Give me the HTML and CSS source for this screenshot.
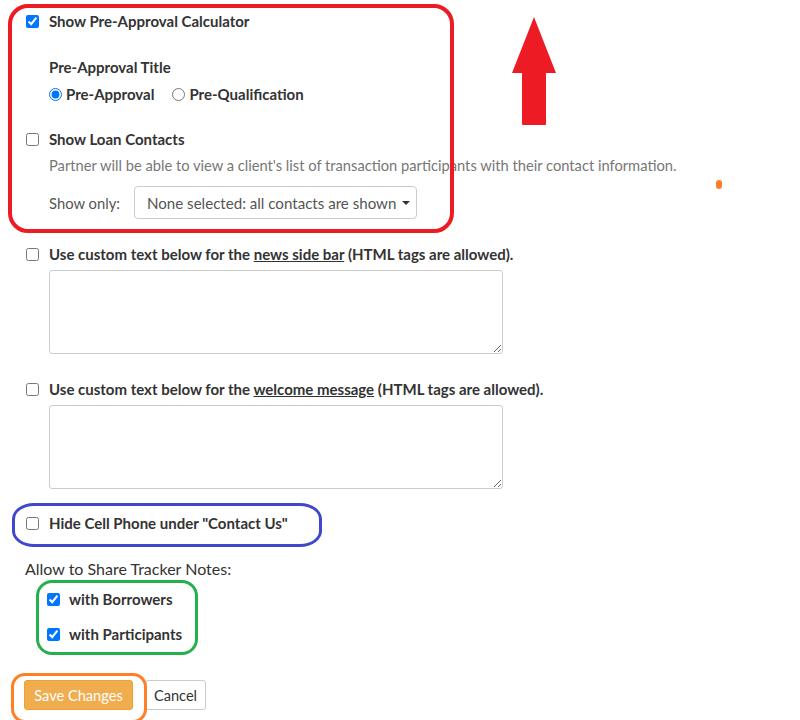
FILE: index.html
```html
<!DOCTYPE html>
<html>
<head>
<meta charset="utf-8">
<link rel="stylesheet" href="styles.css">
</head>
<body>
<div class="page">
  <label class="row r1"><input type="checkbox" checked><span class="lbl">Show Pre-Approval Calculator</span></label>
  <div class="sub title">Pre-Approval Title</div>
  <div class="sub radios">
    <label class="radio"><input type="radio" name="t" checked><span class="lbl">Pre-Approval</span></label>
    <label class="radio"><input type="radio" name="t"><span class="lbl">Pre-Qualification</span></label>
  </div>
  <label class="row r2"><input type="checkbox"><span class="lbl">Show Loan Contacts</span></label>
  <div class="sub help">Partner will be able to view a client's list of transaction participants with their contact information.</div>
  <div class="sub showonly">
    <span class="so-lbl">Show only:</span>
    <div class="select"><span class="sel-text">None selected: all contacts are shown</span><span class="caret"></span></div>
  </div>
  <label class="row r3"><input type="checkbox"><span class="lbl">Use custom text below for the <u>news side bar</u> (HTML tags are allowed).</span></label>
  <textarea class="sub ta"></textarea>
  <label class="row r4"><input type="checkbox"><span class="lbl">Use custom text below for the <u>welcome message</u> (HTML tags are allowed).</span></label>
  <textarea class="sub ta"></textarea>
  <label class="row r5"><input type="checkbox"><span class="lbl">Hide Cell Phone under "Contact Us"</span></label>
  <div class="allow">Allow to Share Tracker Notes:</div>
  <label class="row nested n1"><input type="checkbox" checked><span class="lbl">with Borrowers</span></label>
  <label class="row nested n2"><input type="checkbox" checked><span class="lbl">with Participants</span></label>
  <div class="buttons">
    <button class="btn save">Save Changes</button>
    <button class="btn cancel">Cancel</button>
  </div>
</div>

<div class="ann red-box"></div>
<svg class="ann arrow" width="46" height="110" viewBox="0 0 46 110">
  <path d="M22 0 L44 56 L34 56 L34 107 Q34 108 33 108 L11 108 Q10 108 10 107 L10 56 L0 56 Z" fill="#ed1c24"/>
</svg>
<div class="ann dot"></div>
<div class="ann blue-box"></div>
<div class="ann green-box"></div>
<div class="ann orange-box"></div>
</body>
</html>
```

FILE: styles.css
```css
* { box-sizing: border-box; }
html, body { margin: 0; padding: 0; background: #fff; }
body {
  font-family: Lato, "Noto Sans", sans-serif;
  color: #333;
  font-size: 14.7px;
  position: relative;
  width: 800px;
  height: 720px;
  overflow: hidden;
}
.page {
  padding-left: 26px;
  padding-top: 11px;
  display: flex;
  flex-direction: column;
  align-items: flex-start;
}
.row {
  display: flex;
  align-items: center;
  gap: 10px;
  line-height: 20px;
  height: 20px;
}
.row input {
  width: 13px;
  height: 13px;
  margin: 0;
}
.lbl { font-weight: 700; color: #333; font-size: 15px; white-space: nowrap; }
.sub { margin-left: 23px; }
.title { margin-top: 26px; line-height: 20px; font-weight: 700; font-size: 15px; }
.radios {
  margin-top: 7px;
  display: flex;
  gap: 18px;
  line-height: 20px;
}
.radio { display: flex; align-items: center; gap: 4px; }
.radio input { width: 13px; height: 13px; margin: 0; }
.r2 { margin-top: 25px; }
.help { margin-top: 6px; line-height: 20px; color: #777; font-weight: 400; white-space: nowrap; }
.showonly {
  margin-top: 11px;
  display: flex;
  align-items: center;
  gap: 14px;
  color: #555;
  font-size: 14.8px;
}
.select {
  height: 33px;
  width: 283px;
  border: 1px solid #ccc;
  border-radius: 4px;
  padding: 0 6px 0 12px;
  display: flex;
  align-items: center;
  color: #555;
  font-size: 15.1px;
  white-space: nowrap;
}
.caret {
  margin-left: 6px;
  flex: none;
  width: 0; height: 0;
  border-left: 4px solid transparent;
  border-right: 4px solid transparent;
  border-top: 4px solid #333;
}
.r3 { margin-top: 25px; }
.ta {
  margin-top: 6px;
  width: 454px;
  height: 84px;
  border: 1px solid #ccc;
  border-radius: 3px;
  font-family: inherit;
  padding: 0;
  resize: both;
}
.r4 { margin-top: 25px; }
.r5 { margin-top: 24px; }
.allow { margin-top: 26px; margin-left: -1px; font-size: 16px; line-height: 20px; color: #333; }
.nested { margin-left: 21px; gap: 9px; }
.n1 { margin-top: 10px; }
.n2 { margin-top: 15px; }
.buttons {
  margin-top: 36px;
  margin-left: -2px;
  display: flex;
  gap: 12px;
  align-items: center;
}
.btn {
  font-family: inherit;
  font-size: 14.6px;
  height: 30px;
  border-radius: 3px;
  cursor: pointer;
  margin: 0;
}
.save {
  width: 109px;
  background: #f0ad4e;
  border: 1px solid #eea236;
  color: #fff;
}
.cancel {
  width: 61px;
  background: #fff;
  border: 1px solid #ccc;
  color: #333;
}
.ann { position: absolute; pointer-events: none; }
.red-box {
  left: 8px; top: 4px; width: 446px; height: 229px;
  border: 4px solid #ed1c24;
  border-radius: 20px;
}
.arrow { left: 512px; top: 17px; }
.dot {
  left: 716px; top: 180px; width: 6px; height: 9px;
  background: #ff7f27; border-radius: 3px;
}
.blue-box {
  left: 12px; top: 503px; width: 310px; height: 44px;
  border: 3px solid #3f48cc;
  border-radius: 22px / 16px;
}
.green-box {
  left: 36px; top: 580px; width: 162px; height: 75px;
  border: 3px solid #22b14c;
  border-radius: 16px;
}
.orange-box {
  left: 11px; top: 673px; width: 136px; height: 50px;
  border: 3px solid #ff7f27;
  border-radius: 14px;
}
```
